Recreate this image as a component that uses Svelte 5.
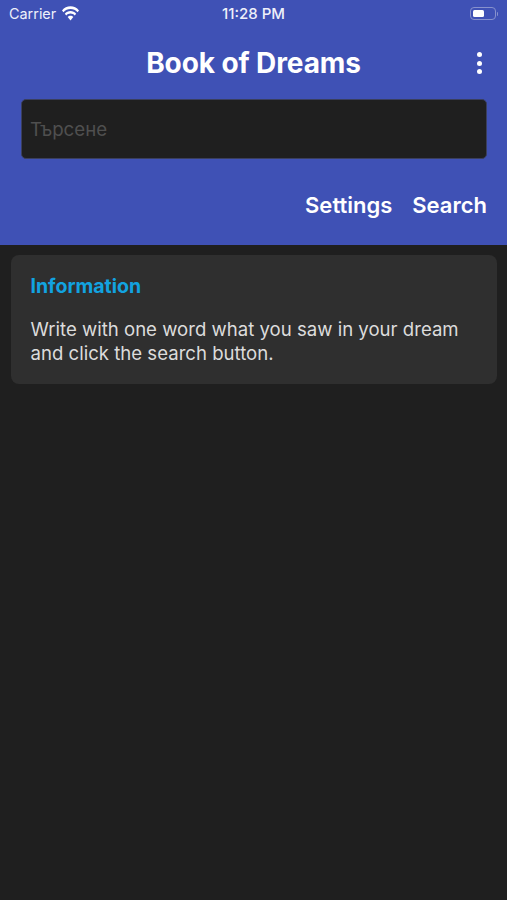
<script>
  const title = 'Book of Dreams';
</script>

<div class="page">
  <header class="header">
    <div class="status">
      <div class="status-left">
        <span class="carrier">Carrier</span>
        <svg class="wifi" width="19" height="15" viewBox="0 0 19 13" preserveAspectRatio="none" aria-hidden="true">
          <path d="M9.5 2.6c2.7 0 5.2 1 7 2.8l1.5-1.6C15.8 1.6 12.8.3 9.5.3S3.200 1.600 1 3.800l1.500 1.600c1.800-1.800 4.300-2.800 7-2.800z" fill="#fff"/>
          <path d="M9.500 6.600c1.600 0 3.100.6 4.200 1.700l1.500-1.600c-1.500-1.400-3.500-2.300-5.700-2.300s-4.200.9-5.700 2.300l1.500 1.600c1.100-1.100 2.600-1.700 4.200-1.700z" fill="#fff"/>
          <path d="M9.500 8.500c-1.100 0-2.100.4-2.800 1.100l2.800 3 2.800-3c-.7-.7-1.700-1.100-2.800-1.100z" fill="#fff"/>
        </svg>
      </div>
      <span class="time">11:28 PM</span>
      <div class="battery" aria-hidden="true">
        <span class="battery-body"><span class="battery-fill"></span></span>
        <span class="battery-cap"></span>
      </div>
    </div>

    <div class="toolbar">
      <h1>{title}</h1>
      <div class="dots" aria-hidden="true"><i></i><i></i><i></i></div>
    </div>

    <div class="field">Търсене</div>

    <div class="actions">
      <span>Settings</span>
      <span>Search</span>
    </div>
  </header>

  <main class="content">
    <section class="card">
      <h2>Information</h2>
      <p>Write with one word what you saw in your dream<br />and click the search button.</p>
    </section>
  </main>
</div>

<style>
  :global(body) {
    margin: 0;
    background: #1f1f1f;
  }
  .page {
    width: 507px;
    height: 900px;
    overflow: hidden;
    background: #1f1f1f;
    font-family: Inter, "Noto Sans", sans-serif;
    color: #fff;
  }
  .header {
    height: 245px;
    box-sizing: border-box;
    background: #3f51b5;
    display: flex;
    flex-direction: column;
  }
  .status {
    height: 27px;
    display: grid;
    grid-template-columns: 1fr auto 1fr;
    align-items: center;
    padding: 0 9px;
    font-size: 15px;
    font-weight: 500;
    color: #eef0fa;
  }
  .status-left {
    display: flex;
    align-items: center;
    gap: 5px;
  }
  .carrier {
    font-size: 14.4px;
    font-weight: 400;
  }
  .wifi {
    margin-bottom: 1px;
  }
  .battery {
    justify-self: end;
    display: flex;
    align-items: center;
    gap: 1px;
  }
  .battery-body {
    width: 26px;
    height: 13px;
    box-sizing: border-box;
    border: 1px solid #8791cd;
    border-radius: 4px;
    padding: 2px;
    display: flex;
  }
  .battery-fill {
    width: 11px;
    background: #fff;
    border-radius: 1.500px;
  }
  .battery-cap {
    width: 1.500px;
    height: 4px;
    background: #8791cd;
    border-radius: 0 1px 1px 0;
  }
  .toolbar {
    height: 48px;
    margin-top: 11px;
    position: relative;
    display: flex;
    align-items: center;
    justify-content: center;
  }
  h1 {
    margin: 1px 0 0;
    font-size: 28px;
    font-weight: 700;
    letter-spacing: -0.1px;
  }
  .dots {
    position: absolute;
    right: 25.500px;
    top: 14px;
    display: flex;
    flex-direction: column;
    gap: 3.500px;
  }
  .dots i {
    width: 5px;
    height: 5px;
    border-radius: 50%;
    background: #fff;
  }
  .field {
    margin: 13px 20px 0 21px;
    height: 60px;
    box-sizing: border-box;
    background: #1f1f1f;
    border: 1px solid #3a3f5e;
    border-radius: 5px;
    padding-left: 8px;
    display: flex;
    align-items: center;
    font-size: 18.700px;
    color: #4f4f4f;
  }
  .actions {
    margin-top: 32px;
    padding-right: 20px;
    display: flex;
    justify-content: flex-end;
    gap: 20px;
    font-size: 22px;
    font-weight: 600;
    line-height: 28px;
  }
  .content {
    padding: 10px 10px 0 11px;
  }
  .card {
    height: 129px;
    box-sizing: border-box;
    background: #2f2f2f;
    border-radius: 8px;
    padding: 20px 19.500px 0;
  }
  h2 {
    margin: 0;
    font-size: 19.500px;
    font-weight: 700;
    line-height: 23px;
    color: #12a3e0;
  }
  p {
    margin: 20px 0 0;
    font-size: 18.600px;
    line-height: 23.500px;
    color: #dcdcdc;
  }
</style>
